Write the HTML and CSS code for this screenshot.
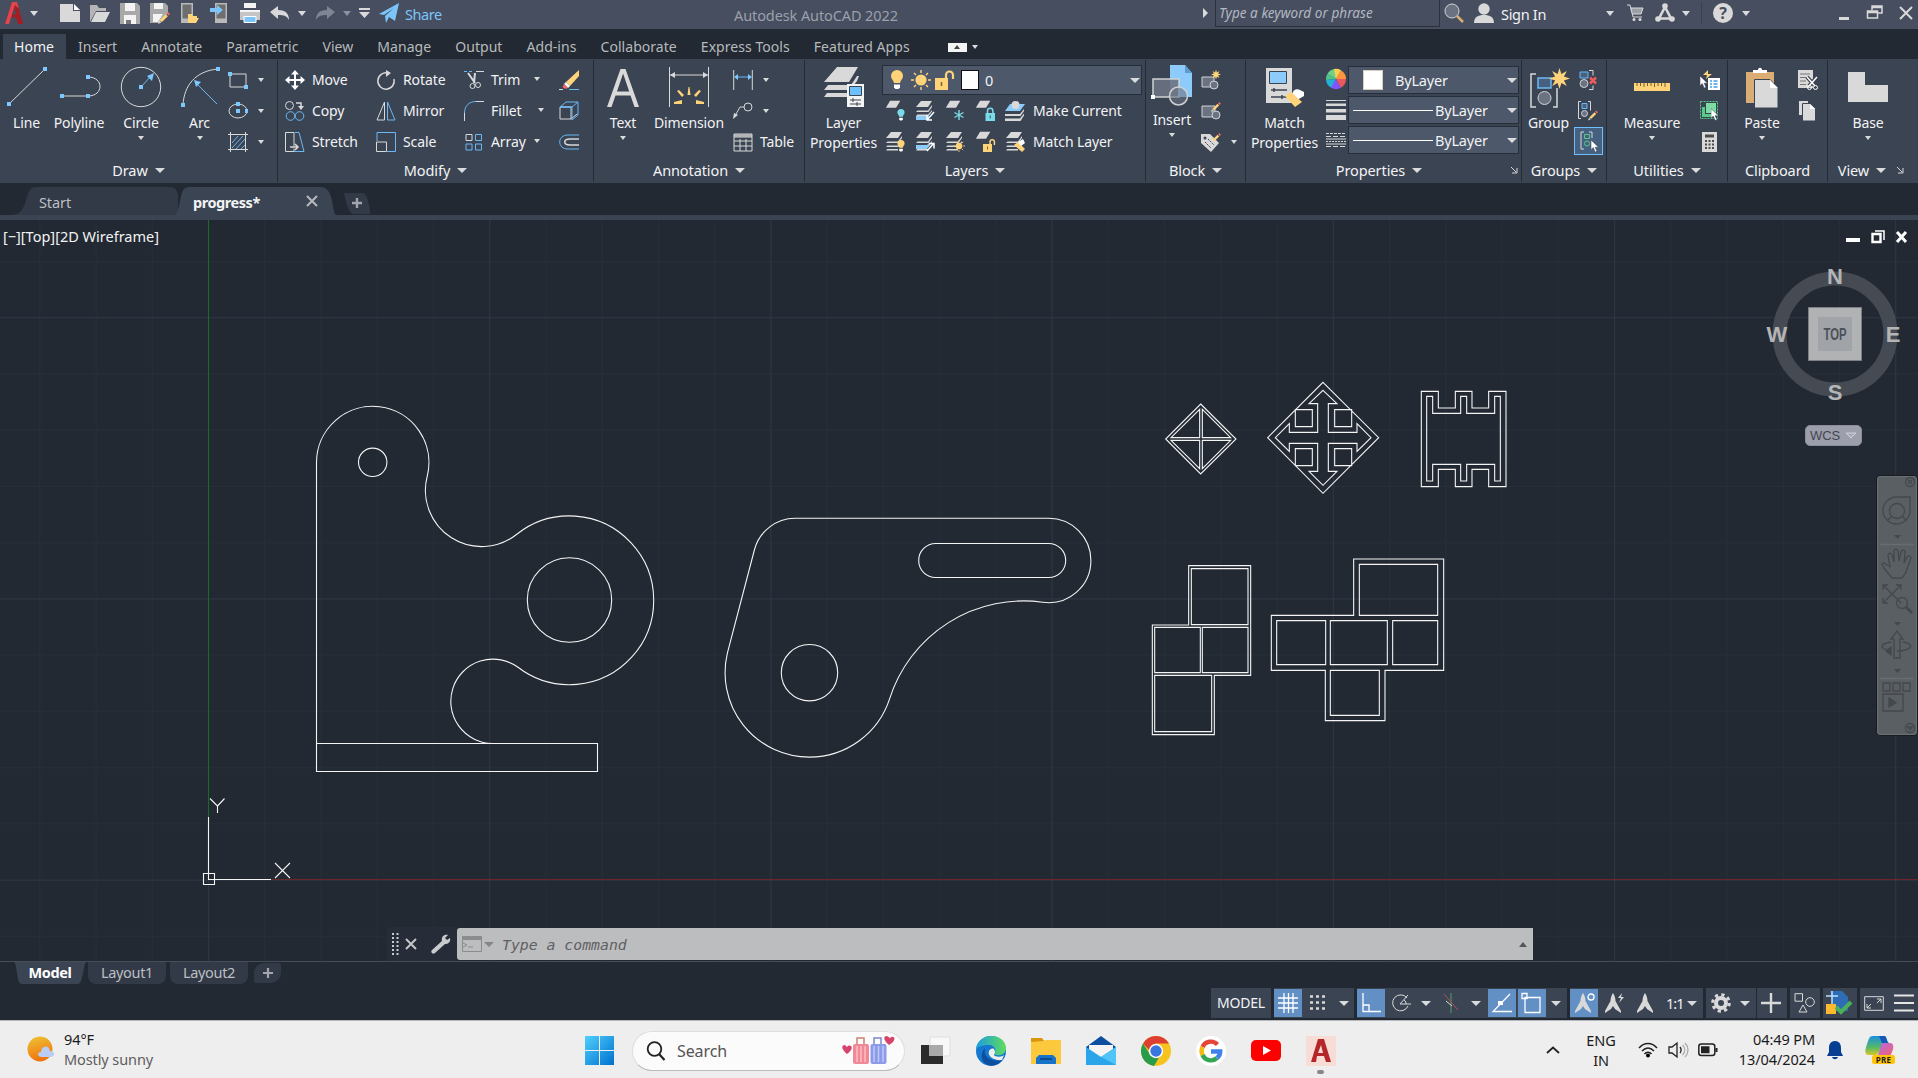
FILE: index.html
```html
<!DOCTYPE html>
<html lang="en">
<head>
<meta charset="utf-8">
<title>Autodesk AutoCAD 2022</title>
<link rel="stylesheet" href="styles.css">
</head>
<body>
<svg class="defs" width="0" height="0">
  <symbol id="sheet" viewBox="0 0 20 20"><path class="fl" d="M6 1h12l-5 8H1z"/></symbol>
  <symbol id="stack" viewBox="0 0 20 20"><path class="fl" d="M6 0h11l-4 6H1zM2.500 9.500H13l4-5.500v2L13.500 11H1zM2.500 13.500H13l4-4.500v1.500L13.500 15H1zM1 18.500h12V17H2.200z"/></symbol>
  <symbol id="burst" viewBox="0 0 20 20"><path class="fy" d="M10 0l1.800 5.800L17 2.800l-2.800 5.300L20 10l-5.800 1.900 2.800 5.300-5.200-2.900L10 20l-1.800-5.700L3 17.200l2.800-5.300L0 10l5.800-1.900L3 2.800l5.200 3z"/></symbol>
  <symbol id="pencil" viewBox="0 0 12 12"><path fill="#f06a63" d="M8.500 1.500L10 0l2 2-1.500 1.500z"/><path class="fy" d="M7.800 2.200l2 2L4 10 1.500 8.400z"/><path class="fl" d="M1.300 8.800L0 12l3.400-1.500z"/></symbol>
  <symbol id="pointer" viewBox="0 0 12 16"><path fill="#fff" stroke="#3b4453" stroke-width=".7" d="M0 0v13l3-3 2.500 6 2.500-1-2.500-5.500H10z"/></symbol>
  <symbol id="bulb" viewBox="0 0 12 20"><path d="M6 0a6 6 0 0 1 6 6c0 3-2.500 4-3 7H3C2.500 10 0 9 0 6a6 6 0 0 1 6-6z"/><path fill="#fff" d="M3 14.500h6v3L7.500 19h-3L3 17.500z"/></symbol>
  <symbol id="sun" viewBox="0 0 20 20"><circle class="fy" cx="10" cy="10" r="5.600"/><path stroke="#ffd37a" stroke-width="1.400" d="M10 0v3M10 17v3M0 10h3M17 10h3M3 3l2 2M15 15l2 2M3 17l2-2M15 5l2-2"/></symbol>
  <symbol id="launch" viewBox="0 0 8 8"><path class="l" d="M1 1l5 5M7 2v5H2"/></symbol>
  <symbol id="needle" viewBox="0 0 20 20"><path class="fl" d="M10 0c1.500 2 2.500 5 2.500 8l5.500 10v2l-6-4-2-3-2 3-6 4v-2L7.500 8c0-3 1-6 2.500-8z"/></symbol>
</svg>

<header class="titlebar">
  <div class="app-menu">
    <svg width="20" height="24" viewBox="0 0 20 24"><path fill="#a51d22" d="M1 23L8 1h5l6 22h-5l-1.500-6L7 16l-2 7z"/><path fill="#e0474c" d="M8 1h5l2 7-4-4-6 19H1z"/><path fill="#464e60" d="M10.300 7l2 6.500H8.200z"/></svg>
    <i class="caret"></i>
  </div>
  <div class="quick">
    <svg width="20" height="20"><path class="fl" d="M0 1h13v7h7v11H0z"/><path fill="#fff" d="M14 1l6 6h-6z"/></svg>
    <svg width="20" height="20"><path fill="#b5b5b5" d="M0 19V2h7l2 3h7v3H6z"/><path class="fl" d="M6 9h14l-5 10H1z"/></svg>
    <svg width="20" height="22"><path fill="#a9a9a9" d="M0 1h17l3 3v18H0z"/><path fill="#f4f4f4" d="M5 1h10v8H5zM4 13h12v9H4z"/><path fill="#777" d="M6 18h5v4H6z"/></svg>
    <svg width="20" height="22"><path fill="#a9a9a9" d="M0 1h15l3 3v7l-9 10H0z"/><path fill="#f4f4f4" d="M4 1h9v6H4zM3 12h10l-5 8H3z"/><use href="#pencil" x="8" y="10" width="12" height="12"/></svg>
    <svg width="20" height="22"><rect x="1" y="1" width="12" height="20" fill="#b9b9b9"/><rect x="2.500" y="2.500" width="9" height="14" fill="#6e6e6e"/><path class="fy" d="M8 21v-9h4l1 2h4v2h2l-3 5z"/></svg>
    <svg width="20" height="22"><rect x="5" y="1" width="12" height="20" fill="#b9b9b9"/><rect x="6.500" y="2.500" width="9" height="14" fill="#6e6e6e"/><path fill="#7cc5fb" d="M0 6h7V3l6 5-6 5v-3H0z"/></svg>
    <svg width="20" height="22"><path fill="#f4f4f4" d="M4 1h12v5H4zM0 8h20v3H0z"/><path fill="#c5c5c5" d="M0 10h20v8H0z"/><path fill="#7cc5fb" stroke="#fff" d="M4 14.500h12v6H4z"/></svg>
    <svg width="20" height="16"><path class="fl" d="M0 7l8-6v4c8 0 11 4 11 10-2-4-5-5-11-5v4z"/></svg>
  </div>
  <div class="quick-more">
    <i class="caret"></i>
    <svg class="redo" width="20" height="16"><path fill="#7e8594" d="M20 7l-8-6v4C4 5 1 9 1 15c2-4 5-5 11-5v4z"/></svg>
    <i class="caret dim"></i>
    <svg class="custom" width="11" height="10"><path class="fl" d="M0 0h11v2H0zM0 4h11L5.500 10z"/></svg>
    <svg class="plane" width="20" height="20"><path fill="#7cc5fb" d="M0 11L20 0l-4 18-6-4-3 6-1-7 9-8-10 7z"/></svg>
    <span class="share">Share</span>
  </div>
  <div class="app-title">Autodesk AutoCAD 2022</div>
  <i class="caret-right"></i>
  <div class="keyword">Type a keyword or phrase</div>
  <svg class="mag" width="20" height="20"><circle cx="8" cy="8" r="7" fill="#6b7383" class="stl"/><path stroke="#d9ad74" stroke-width="2.500" d="M13 13l6 6"/></svg>
  <svg class="user" width="20" height="20"><circle class="fl" cx="10" cy="6" r="5.700"/><path class="fl" d="M0 20c0-6 4-8 10-8s10 2 10 8z"/></svg>
  <span class="signin">Sign In</span>
  <i class="caret c1"></i>
  <svg class="cart" width="17" height="18"><path fill="#9b9fa7" d="M3 4h13l-2 6H5z"/><path class="l" d="M0 1h3l3 12h9M4 4h12l-2 6H5"/><circle class="fl" cx="7" cy="15.500" r="1.500"/><circle class="fl" cx="13" cy="15.500" r="1.500"/></svg>
  <svg class="tri" width="20" height="20"><path d="M10 4L4 15.500h12z" fill="none" stroke="#d9d9d9" stroke-width="2.600"/><circle class="fl" cx="10" cy="3" r="2.800"/><circle class="fl" cx="3" cy="16" r="2.800"/><circle class="fl" cx="17" cy="16" r="2.800"/></svg>
  <i class="caret c2"></i>
  <span class="help">?</span>
  <i class="caret c3"></i>
  <svg class="winbtns" width="74" height="16"><path fill="#d9d9d9" d="M0 12h10v3H0z"/><path class="l" stroke-width="1.500" d="M33 5V1h10v7h-4M28.500 6h10v7h-10zM28.500 7.500h10M33 2.500h10"/><path d="M61 2l12 12M73 2L61 14" stroke="#d9d9d9" stroke-width="2"/></svg>
</header>

<nav class="ribbon-tabs">
  <span class="on">Home</span><span>Insert</span><span>Annotate</span><span>Parametric</span><span>View</span><span>Manage</span><span>Output</span><span>Add-ins</span><span>Collaborate</span><span>Express Tools</span><span>Featured Apps</span>
  <b class="mini"></b><i class="caret"></i>
</nav>

<section class="ribbon">
  <div class="panel draw">
    <div class="body">
      <div class="big w-line"><svg width="40" height="40"><path class="l" d="M2 38L38 3"/><path class="fb" d="M0 36h4v4H0zM36 1h4v4h-4z"/></svg><span>Line</span></div>
      <div class="big w-poly"><svg width="40" height="40"><path class="l" d="M2 30h26c16 0 16-19 0-19"/><path class="fb" d="M0 28h4v4H0zM26 28h4v4h-4zM26 9h4v4h-4z"/></svg><span>Polyline</span></div>
      <div class="big w-circle"><svg width="42" height="42"><circle class="l" cx="21" cy="21" r="19.700"/><path class="b" d="M21 21l10-11"/><path class="fb" d="M19 19h4v4h-4zM34 7l-2 8-5-5z"/></svg><span>Circle</span><i class="caret"></i></div>
      <div class="big w-arc"><svg width="40" height="42"><path class="l" d="M3 39C4 20 15 5 38 3"/><path class="b" d="M37 38L16 17"/><path class="fb" d="M1 37h4v4H1zM36 1h4v4h-4zM14 14l7 2-5 5z"/></svg><span>Arc</span><i class="caret"></i></div>
      <div class="col">
        <div class="row"><svg width="20" height="20"><path class="l" d="M2 4h16v13H2z"/><path class="fb" d="M0 2h4v4H0zM16 15h4v4h-4z"/></svg><i class="caret"></i></div>
        <div class="row"><svg width="20" height="20"><ellipse class="l" cx="10" cy="10" rx="9" ry="7"/><path class="fb" d="M8 1h4v4H8zM8 8h4v4H8zM17 8h3v4h-3z"/></svg><i class="caret"></i></div>
        <div class="row"><svg width="20" height="20"><path class="b" d="M4 11l6-7M4 16L15 4M8 17l9-10M13 17l4-4"/><path class="l" d="M0 2.500h20M0 17.500h20M2.500 0v20M17.500 0v20"/></svg><i class="caret"></i></div>
      </div>
    </div>
    <div class="label">Draw<i class="caret lg"></i></div>
  </div>

  <div class="panel modify">
    <div class="body">
      <div class="col m1">
        <div class="row"><svg width="20" height="20"><path fill="#fff" d="M10 0l4 4.500h-3V9h4.500V6L20 10l-4.500 4v-3H11v4.500h3L10 20l-4-4.500h3V11H4.500v3L0 10l4.500-4v3H9V4.500H6z"/></svg><span>Move</span></div>
        <div class="row"><svg width="20" height="20"><circle class="l" cx="4.500" cy="4.500" r="4"/><path class="l" stroke-width="1.500" d="M11 2h5v5"/><path class="fl" d="M13 5h6l-3 4z"/><circle class="b" cx="5.500" cy="15" r="4.300"/><circle class="b" cx="14.500" cy="15" r="4.300"/></svg><span>Copy</span></div>
        <div class="row"><svg width="20" height="20"><path class="l" d="M9 14V.5H.5v19H9v-3"/><path class="b" d="M10 .5h4l5 19H9"/><path class="l" stroke-width="1.500" d="M5 15h8M10 12l3 3-3 3"/></svg><span>Stretch</span></div>
      </div>
      <div class="col m2">
        <div class="row"><svg width="20" height="20"><path class="l" stroke-width="1.500" d="M12 3A8.200 8.200 0 1 0 18 9"/><path class="fl" d="M10 0l5 3-5 4z"/></svg><span>Rotate</span></div>
        <div class="row"><svg width="20" height="20"><path class="l" d="M8.500 1v18H1z"/><path class="b" d="M11.500 1v18H19z"/></svg><span>Mirror</span></div>
        <div class="row"><svg width="20" height="20"><path class="b" d="M1 9V.5h18.500v19H11"/><path class="l" d="M.5 10h10v9.500H.5z"/></svg><span>Scale</span></div>
      </div>
      <div class="col m3">
        <div class="row"><svg width="20" height="20"><path class="b" stroke-dasharray="3 2" d="M0 1.500h8"/><path class="l" d="M12 1.500h8"/><path class="l" stroke-width="2" d="M4 3l7 10M11 3l-1 10"/><circle class="l" cx="8.500" cy="16" r="2.500"/><circle class="l" cx="14" cy="15" r="2.500"/></svg><span>Trim</span><i class="caret"></i></div>
        <div class="row"><svg width="20" height="20"><path class="l" d="M.5 20v-8M12 .5h8"/><path class="b" d="M.5 12C.5 5 5 .5 12 .5"/></svg><span>Fillet</span><i class="caret f"></i></div>
        <div class="row"><svg width="20" height="20"><path class="l" d="M2 2.500h6v6H2z"/><path class="b" d="M11.500 2.500h6v6h-6zM2 12h6v6H2zM11.500 12h6v6h-6z"/></svg><span>Array</span><i class="caret"></i></div>
      </div>
      <div class="col">
        <div class="row"><svg width="20" height="20"><path class="fy" d="M20 0v6l-9 10-4-4z"/><path fill="#fff" d="M7 12l4 4-2 2-4-4z"/><path fill="#f06a63" d="M5 14l4 4c-2 1.500-6 .5-5-2z"/><path class="l" d="M0 19.500h4"/><path class="b" d="M10 19.500h10"/></svg></div>
        <div class="row"><svg width="20" height="20"><path class="l" d="M1 6h11v12H1zM12 18l6-5"/><path class="b" d="M1 6l6-5h12v13l-6 5V6zM13 6l6-5M1 6h12"/></svg></div>
        <div class="row"><svg width="20" height="20"><path class="b" d="M20 3H9C-2 3-2 17 9 17h11"/><path class="l" stroke-width="1.500" d="M20 7h-9c-7 0-7 6 0 6h9"/></svg></div>
      </div>
    </div>
    <div class="label">Modify<i class="caret lg"></i></div>
  </div>

  <div class="panel annot">
    <div class="body">
      <div class="big w-text"><svg width="34" height="42"><path class="fl" d="M1 41L14.500 3h5L33 41h-4.500l-4-11.500H9.500L5.500 41zM11 25.500h12.200L17.100 7.500z"/></svg><span>Text</span><i class="caret"></i></div>
      <div class="big w-dim"><svg width="42" height="42"><path class="l" d="M1.500 1v40M40.500 1v40M2 9h38"/><path class="fl" d="M2 9l5-3v6zM40 9l-5-3v6z"/><path class="fy" d="M19.500 29l1-8h1l1 8zM14 31l-5-6 2-1 5 5zM28 31l5-6-2-1-5 5zM6 36l8-2v4H6zM36 36l-8-2v4h8z"/></svg><span>Dimension</span></div>
      <div class="col">
        <div class="row"><svg width="20" height="20"><path class="l" d="M.7 0v20M19.300 0v20"/><path class="b" d="M3 7h14"/><path class="fb" d="M1 7l4-3v6zM19 7l-4-3v6z"/></svg><i class="caret"></i></div>
        <div class="row"><svg width="20" height="20"><circle class="l" cx="15" cy="6" r="4"/><path class="l" d="M11 6H7L2 15"/><path class="fl" d="M0 18l1-6 4 2z"/></svg><i class="caret"></i></div>
        <div class="row tbl"><svg width="20" height="20"><path class="l" d="M1 2h18v17H1zM1 4h18M1 9h18M1 14h18M7 7v12M13 7v12"/><path class="fl" opacity=".5" d="M1 2h18v4H1z"/></svg><span>Table</span></div>
      </div>
    </div>
    <div class="label">Annotation<i class="caret lg"></i></div>
  </div>

  <div class="panel layers">
    <div class="body">
      <div class="big w-lay"><svg width="42" height="42"><path class="fl" d="M14 1h21l-9 15H1zM5 19h23l6-9h2l-2 5-7 9H1zM4 27h21v4H1z"/><path fill="#f4f4f4" d="M24 18h17v23H24z"/><path fill="#6cc0ff" stroke="#3b4453" d="M26.500 20.500h12v9h-12z"/><path stroke="#3b4453" fill="none" d="M27 34h11M27 38h11M30 32v4M34 36v4"/></svg><span>Layer<br>Properties</span></div>
      <div class="col">
        <div class="combo layer-combo">
          <svg width="14" height="22" fill="#ffd37a"><use href="#bulb" x="0" y="1" width="14" height="20"/></svg>
          <svg width="20" height="22"><use href="#sun" x="0" y="0" width="20" height="22"/></svg>
          <svg width="19" height="22"><path class="fy" d="M0 9h13v12H0z"/><path stroke="#ffd37a" stroke-width="2.200" fill="none" d="M11 9V6a3.500 3.500 0 0 1 7 0v4"/><path stroke="#7a6130" stroke-width="1.500" d="M6.500 13v4"/></svg>
          <b class="swatch"></b><span>0</span><i class="caret lg"></i>
        </div>
        <div class="row five">
          <svg width="20" height="20" fill="#79dbe8"><use href="#sheet" width="17" height="17" y="-1"/><use href="#bulb" x="12" y="8" width="8" height="12"/></svg>
          <svg width="20" height="20"><use href="#stack" width="20" height="20"/><path class="fb2" d="M1 15h11l2-2v3l-2 3H1z"/><path stroke="#fff" stroke-width="1.500" d="M19 11l-6 7M12 14v5h5" fill="none"/></svg>
          <svg width="20" height="20"><use href="#sheet" width="17" height="17" y="-1"/><path stroke="#79dbe8" stroke-width="1.400" d="M14 9v10M9.500 11.500l9 5M18.500 11.500l-9 5"/></svg>
          <svg width="20" height="20"><use href="#sheet" width="17" height="17" y="-1"/><path fill="#79dbe8" d="M10.500 12h9.500v8h-9.500z"/><path stroke="#79dbe8" stroke-width="1.500" fill="none" d="M12.500 12v-2a2.700 2.700 0 0 1 5.400 0v2"/><path stroke="#2b5960" d="M15.200 14.500v3"/></svg>
          <svg width="20" height="20"><path class="fb2" d="M5 3h15l-5 7H0z"/><circle class="fl" cx="10.500" cy="4" r="4"/><path class="fl" d="M0 13h15l4-5v2l-3.500 5H0zM0 17.500h15l4-5v2L15.500 20H0z"/></svg>
          <span>Make Current</span>
        </div>
        <div class="row five">
          <svg width="20" height="20" fill="#ffd37a"><use href="#stack" width="20" height="20"/><use href="#bulb" x="12" y="8" width="8" height="12"/></svg>
          <svg width="20" height="20"><use href="#stack" width="20" height="20"/><path class="fb2" d="M1 13h11l2-2v3l-2 3H1z"/><path stroke="#fff" stroke-width="1.500" d="M12 19l7-8M14 11.500h5v5" fill="none"/></svg>
          <svg width="20" height="20"><use href="#stack" width="20" height="20"/><use href="#sun" x="8" y="8" width="12" height="12"/></svg>
          <svg width="20" height="20"><use href="#sheet" width="17" height="17" y="-1"/><path class="fy" d="M8 12h9v8H8z"/><path stroke="#ffd37a" stroke-width="1.500" fill="none" d="M15 12v-2a2.200 2.200 0 0 1 4.400 0v3"/><path stroke="#7a6130" d="M12.500 14.500v3"/></svg>
          <svg width="20" height="20"><use href="#stack" width="20" height="20"/><path class="fy" d="M9 13l4-3 7 7-3 3z"/><path fill="#fff" d="M13 10l5-3 2 4-4 3z"/></svg>
          <span>Match Layer</span>
        </div>
      </div>
    </div>
    <div class="label">Layers<i class="caret lg"></i></div>
  </div>

  <div class="panel block">
    <div class="body">
      <div class="big w-ins"><svg width="42" height="42"><path fill="#8ccbfa" d="M19 0h15l7 8v24H19z"/><path fill="#5d9cd0" d="M34 0v8h7z"/><path class="stl" stroke-width="1.500" fill="#6b7383" fill-opacity=".9" d="M2 14h26v18H2z"/><circle class="stl" stroke-width="1.500" fill="#6b7383" fill-opacity=".6" cx="27.500" cy="31" r="9"/><path fill="#fff" d="M0 30h4v4H0z"/></svg><span>Insert</span><i class="caret"></i></div>
      <div class="col">
        <div class="row"><svg width="20" height="20"><path class="stl" fill="#6b7383" d="M1 7h12v10H1z"/><circle class="stl" fill="#6b7383" cx="13" cy="15" r="4"/><use href="#burst" x="10" y="-1" width="10" height="11"/></svg></div>
        <div class="row"><svg width="20" height="20"><path class="stl" fill="#6b7383" d="M1 5h13v11H1z"/><circle class="stl" fill="#6b7383" cx="15" cy="14" r="4"/><use href="#pencil" x="10" y="0" width="10" height="12"/></svg></div>
        <div class="row"><svg width="20" height="20"><path class="fl" d="M0 2h9l9 9-8 9-10-9z"/><circle cx="4" cy="6" r="1.500" fill="#3b4453"/><path stroke="#3b4453" stroke-dasharray="2 1" d="M4 10l6 6M7 7l6 6"/><use href="#pencil" x="10" y="0" width="10" height="12"/></svg><i class="caret"></i></div>
      </div>
    </div>
    <div class="label">Block<i class="caret lg"></i></div>
  </div>

  <div class="panel props">
    <div class="body">
      <div class="big w-match"><svg width="42" height="42"><path class="fl" d="M2 2h26v35H2z"/><path fill="#8ccbfa" stroke="#3b4453" d="M5.500 5.500h17v12h-17z"/><path stroke="#3b4453" d="M7 24h16M7 31h16M10 22v4M18 29v4" stroke-width="1.500"/><path fill="#fff" d="M28 28c2-6 6-5 8-4l4 2v4l-7 4z"/><path class="fy" d="M21 30l6-4 11 10-7 5z"/></svg><span>Match<br>Properties</span></div>
      <div class="col ic">
        <svg width="20" height="20"><path fill="#6ecf8a" d="M10 10V0a10 10 0 0 0-8.700 5z"/><path fill="#4fc58b" d="M10 10L1.300 5A10 10 0 0 0 0 11z"/><path fill="#23b1d8" d="M10 10L0 11a10 10 0 0 0 6 8z"/><path fill="#8353ff" d="M10 10L5 18.700a10 10 0 0 0 10 0z"/><path fill="#e8595c" d="M10 10l5 8.700a10 10 0 0 0 5-8.700z"/><path fill="#ff9440" d="M10 10h10a10 10 0 0 0-5-8.700z"/><path fill="#ffd04f" d="M10 10l5-8.700A10 10 0 0 0 8 0z"/></svg>
        <svg width="20" height="20"><path class="fl" d="M0 0h20v1H0zM0 3.500h20V6H0zM0 9h20v3.500H0zM0 15h20v5H0z"/></svg>
        <svg width="20" height="20"><path class="l" d="M0 13h20M0 8h20"/><path class="l" stroke-dasharray="3 1" d="M0 2.500h20"/><path class="l" stroke-dasharray="5 2" d="M0 5.500h20M0 15.500h20"/><path class="l" stroke-dasharray="2 1" d="M0 10.500h20"/></svg>
      </div>
      <div class="combos">
        <div class="combo"><b class="swatch wide"></b><span>ByLayer</span><i class="caret lg"></i></div>
        <div class="combo"><b class="ln"></b><span>ByLayer</span><i class="caret lg"></i></div>
        <div class="combo"><b class="ln"></b><span>ByLayer</span><i class="caret lg"></i></div>
      </div>
    </div>
    <div class="label">Properties<i class="caret lg"></i><svg class="launch" width="8" height="8"><use href="#launch"/></svg></div>
  </div>

  <div class="panel groups">
    <div class="body">
      <div class="big w-grp"><svg width="42" height="42"><path class="l" stroke-width="1.500" d="M8 8H3v33h5M25 41h4V22"/><path class="b" fill="#4c6482" stroke-width="1.500" d="M10 12h13v10H10z"/><circle class="stl" fill="#6b7383" cx="16.500" cy="32" r="6.500"/><use href="#burst" x="21" y="2" width="21" height="21"/></svg><span>Group</span></div>
      <div class="col">
        <div class="row"><svg width="20" height="20"><path class="b" fill="#4c6482" d="M2 2h8v6H2z"/><circle class="stl" fill="#6b7383" cx="6" cy="13.500" r="4"/><path class="l" d="M11 .5h4v5M11 19.500h4v-4"/><path stroke="#ee5b5b" stroke-width="2.500" d="M12 7.500l6 6M18 7.500l-6 6"/></svg></div>
        <div class="row"><svg width="20" height="20"><path class="l" d="M3 .5H.5v17H3M10 .5h2.500v9"/><path class="b" fill="#4c6482" d="M4 2.500h5v5H4z"/><circle class="stl" cx="6.500" cy="12.500" r="3" fill="#6b7383"/><use href="#pencil" x="10" y="9" width="10" height="11"/></svg></div>
        <div class="row"><div class="toggle"><svg width="20" height="22"><path class="l" d="M5 2H2v17h3M10 2h3v6"/><path stroke="#57c98a" fill="none" d="M5.500 4.500h5v4h-5z"/><circle stroke="#57c98a" fill="none" cx="8" cy="13.500" r="2.500"/><use href="#pointer" x="12" y="10" width="9" height="12"/></svg></div></div>
      </div>
    </div>
    <div class="label">Groups<i class="caret lg"></i></div>
  </div>

  <div class="panel utils">
    <div class="body">
      <div class="big w-meas"><svg width="36" height="40"><path class="fy" d="M0 17h36v8H0z"/><path stroke="#77602f" d="M3 17v3M6.500 17v3M10 17v4M13.500 17v3M17 17v3M20.500 17v4M24 17v3M27.500 17v3M31 17v4"/></svg><span>Measure</span><i class="caret"></i></div>
      <div class="col">
        <div class="row"><svg width="20" height="20"><path fill="#fff" d="M8 8h12v12H8z"/><path stroke="#3f9de8" stroke-width="1.500" d="M10 11h2M13.500 11h4M10 14h2M13.500 14h4M10 17h2M13.500 17h4"/><use href="#pointer" y="5" width="9" height="14"/><path class="fy" d="M8 0L3 5h4l-1 4 6-5H8z"/></svg></div>
        <div class="row"><svg width="20" height="20"><path stroke="#57c98a" stroke-dasharray="2 1" fill="none" d="M.5.500h17v17H.5z"/><path fill="#57c98a" d="M2 6h3v7h9v3H2z"/><path fill="#7ddca4" d="M6 2h10v10H6z"/><use href="#pointer" x="11" y="7" width="9" height="13"/></svg></div>
        <div class="row"><svg width="16" height="20"><path class="fl" d="M0 0h15v20H0z"/><path fill="#4b4b4b" d="M3 2.500h9v3H3zM3 8h2v2H3zM6.500 8h2v2h-2zM10 8h2v2h-2zM3 11.500h2v2H3zM6.500 11.500h2v2h-2zM10 11.500h2v2h-2zM3 15h2v2H3zM6.500 15h2v2h-2zM10 15h2v2h-2z"/></svg></div>
      </div>
    </div>
    <div class="label">Utilities<i class="caret lg"></i></div>
  </div>

  <div class="panel clip">
    <div class="body">
      <div class="big w-paste"><svg width="34" height="42"><path fill="#d9ad74" d="M1 6h28v31H1z"/><path fill="#fff" d="M8 7V4h5c0-3 4-3 4 0h5v3z"/><path class="fl" stroke="#3b4453" d="M9.500 13.500H25l8 9V42H9.500z"/><path fill="#fff" d="M25 14v8h8z"/></svg><span>Paste</span><i class="caret"></i></div>
      <div class="col">
        <div class="row"><svg width="20" height="20"><path class="fl" d="M0 0h15v18H0z"/><path stroke="#777" d="M2 4h10M2 7.500h8M2 11h6M2 14.500h6"/><path stroke="#3b4453" stroke-width="4" d="M9 7l9 10M19 7l-8 9"/><path stroke="#fff" stroke-width="1.500" d="M9 7l8 9M19 7l-8 9"/><circle stroke="#fff" fill="none" cx="11.500" cy="17.500" r="2"/><circle stroke="#fff" fill="none" cx="17.500" cy="17.500" r="2"/></svg></div>
        <div class="row"><svg width="18" height="20"><path class="fl" d="M1 0h9v14H1z"/><path class="fl" stroke="#3b4453" d="M4.500 2.500H12l5.500 5V20h-13z"/><path fill="#fff" d="M12 3v5h5z"/></svg></div>
      </div>
    </div>
    <div class="label">Clipboard</div>
  </div>

  <div class="panel view">
    <div class="body">
      <div class="big w-base"><svg width="40" height="40"><path class="fl" d="M0 6h17v13h23v17H0z"/></svg><span>Base</span><i class="caret"></i></div>
    </div>
    <div class="label">View<i class="caret lg"></i><svg class="launch" width="8" height="8"><use href="#launch"/></svg></div>
  </div>
</section>

<nav class="file-tabs">
  <div class="ftab start">Start</div>
  <div class="ftab current"><span>progress*</span><svg width="12" height="12"><path stroke="#b3b6ba" stroke-width="2.200" d="M1 1l10 10M11 1L1 11"/></svg></div>
  <div class="ftab plus"><svg width="10" height="10"><path stroke="#a3a6ab" stroke-width="2.400" d="M5 0v10M0 5h10"/></svg></div>
</nav>

<main class="canvas">
  <svg class="drawing" width="1918" height="741" viewBox="0 220 1918 741">
    <defs>
      <pattern id="minor" x="208" y="36" width="56.240" height="56.240" patternUnits="userSpaceOnUse"><path d="M.5 0v56.240M0 .5h56.240" stroke="#262e39" fill="none"/></pattern>
      <pattern id="major" x="208" y="36" width="281.200" height="281.200" patternUnits="userSpaceOnUse"><path d="M.5 0v281.200M0 .5h281.200" stroke="#2e3545" fill="none"/></pattern>
    </defs>
    <path fill="url(#minor)" d="M0 220h1918v741H0z"/>
    <path fill="url(#major)" d="M0 220h1918v741H0z"/>
    <path stroke="#1b6a26" d="M208.500 220v597"/>
    <path stroke="#6c262e" d="M271 879.500h1647"/>
    <g fill="none" stroke="#f4f4f4" stroke-width="1.100">
      <path d="M208.500 817v62.500H271M203.500 873.500h11v11h-11zM210 798.500l7.500 7.500v7M217.500 806l7-7.500M275 863l15 15M290 863l-15 15"/>
      <path d="M316.500 743.500V462.300A56.200 56.200 0 1 1 427.200 476.300A56.200 56.200 0 0 0 516.800 534.200A84.400 84.400 0 1 1 518 667.300A42.200 42.200 0 1 0 492.300 743.500"/>
      <path d="M316.500 743.500h281v28h-281z"/>
      <circle cx="372.700" cy="462.300" r="14.200"/><circle cx="569.500" cy="600" r="42.200"/>
      <path d="M795 518.300H1048.700A42.200 42.200 0 0 1 1090.900 560.500A42.200 42.200 0 0 1 1042.700 602.200A140.600 140.600 0 0 0 889.600 698.900A84.400 84.400 0 0 1 809.500 757.100A84.400 84.400 0 0 1 727.500 652.700L754.500 549.500A42.200 42.200 0 0 1 795 518.300z"/>
      <circle cx="809.500" cy="672.700" r="28.200"/>
      <path d="M935.700 543.500h113a17 17 0 0 1 0 34h-113a17 17 0 0 1 0-34z"/>
      <g class="symbols" transform="translate(1130 360) scale(.33333)">
        <path d="M212 132L318 237 212 342 107 237zM209 148v85h-86zM217 148v85h85zM209 326v-85h-86zM217 326v-85h85z"/>
        <path d="M579 67L746 233 579 400 413 233zM579 91l42 40h-26v86h86v-26l42 42-42 41v-24h-86v84h26l-42 42-42-42h26v-84h-85v24l-42-41 42-42v26h85v-86h-26zM496 149h51v51h-51zM614 149h51v51h-51zM496 266h51v51h-51zM614 266h51v51h-51z"/>
        <path d="M874 94h51v50h51V94h50v50h50V94h52v286h-52v-52h-50v52h-50v-52h-51v52h-51zM890 109h18v51h84v-51h18v51h84v-51h17v254h-17v-50h-84v50h-18v-50h-84v50h-18z"/>
        <path d="M176 617h186v329H253v178H67V795h109zM184 626h170v168H184zM74 802h137v136H74zM217 802h137v136H217zM74 946h171v169H74z"/>
        <path d="M671 597h270v334H765v151H586V931H424V766h247zM688 613h235v153H688zM440 782h147v132H440zM601 782h171v132H601zM788 782h135v132H788zM601 931h147v135H601z"/>
      </g>
    </g>
  </svg>
  <div class="view-label"><span>[−]</span><span>[Top]</span><span>[2D Wireframe]</span></div>
  <svg class="view-win" width="66" height="16"><path fill="#fff" d="M0 9h14v4H0z"/><path stroke="#fff" stroke-width="2.400" fill="none" d="M26.500 5h8v8h-8z"/><path stroke="#fff" stroke-width="1.500" d="M29 2h9v9" fill="none"/><path stroke="#fff" stroke-width="3" d="M51 3l9 10M60 3l-9 10"/></svg>

  <div class="viewcube">
    <svg width="140" height="180" viewBox="0 0 140 180">
      <circle cx="71" cy="70" r="55.500" fill="none" stroke="#464b53" stroke-width="14"/>
      <path fill="#b1b2b4" stroke="#7e7f82" d="M44.500 43.500h53v53h-53z"/><path fill="#a0a4a9" d="M54 53h34v34H54z"/>
      <g class="compass" text-anchor="middle"><text x="71" y="20">N</text><text x="71" y="136">S</text><text x="13" y="78">W</text><text x="129" y="78">E</text></g>
      <text class="top" x="71" y="76" text-anchor="middle" textLength="23" lengthAdjust="spacingAndGlyphs">TOP</text>
    </svg>
    <div class="wcs">WCS<svg width="12" height="8"><path d="M1 1h10L6 6z" fill="#a9abb8" stroke="#cfd0da"/></svg></div>
  </div>

  <div class="navbar">
    <svg width="40" height="260" viewBox="0 0 40 260" fill="none" stroke="#44484d" stroke-width="1.300">
      <circle cx="33" cy="6" r="4.500"/><path d="M31 4l4 4M35 4l-4 4"/>
      <path d="M20 21h13v14a13.500 13.500 0 1 1-13-14z"/><circle cx="20" cy="35" r="7.500"/><path d="M14.500 40.500l-4 4M25.500 40.500l4 4"/>
      <path d="M3 68.500h34M3 202.500h34" stroke="#676c70"/>
      <path d="M15 102L7 92c-2-3-3-5 0-5l6 4-2-12c1-3 3-2 4 0l2 7V75c1-3 3-2 4 0l1 10 2-9c1-3 4-2 4 0l-1 11 3-6c2-2 4-1 4 1l-5 14-4 6z"/>
      <path d="M6 109l18 18M24 109L6 127M6 114v-5h5M19 109h5v5M6 122v5h5"/><circle cx="25" cy="127" r="5.500"/><path d="M29 131l6 6" stroke-width="3"/>
      <path d="M17 182v-19h-3l6-8 6 8h-3v19zM14 174c-12-1-12-6 0-8M26 166c12 2 10 8-6 9"/><path fill="#44484d" d="M9 175l5-4v8z"/>
      <path d="M6 207h7v8H6zM16 207h7v8h-7zM26 207h7v8h-7zM6 218h20v17H6z"/><path fill="#44484d" d="M12 222v9l7-4.500z"/>
      <path fill="#44484d" stroke="none" d="M17 59h7l-3.500 4zM17 146h7l-3.500 4zM17 193h7l-3.500 4z"/>
      <circle cx="33" cy="252" r="4.500"/><path d="M30.500 251h5L33 254z"/>
    </svg>
  </div>

  <div class="command">
    <div class="grip">
      <svg width="7" height="22"><path stroke="#c9cacc" stroke-width="2" stroke-dasharray="2 2" d="M1 0v22M5.500 0v22"/></svg>
      <svg width="12" height="12"><path stroke="#c4c5c7" stroke-width="2" d="M1 1l10 10M11 1L1 11"/></svg>
      <svg class="wrench" width="20" height="20"><path fill="#c9cacc" d="M1 16L11 7C10 3 13 0 17 1l-3 3 2 2 3-2c1 4-2 6-5 6L4 19c-2 2-5-1-3-3z"/></svg>
    </div>
    <div class="entry">
      <svg width="20" height="17"><path fill="none" stroke="#8b8c8e" d="M.5.500h19v15H.5z"/><path fill="#8b8c8e" d="M0 0h20v4H0z"/><path stroke="#8b8c8e" fill="none" d="M1 7l4 2-4 2M6 11h5"/></svg>
      <i class="caret lg grey"></i><span>Type a command</span><i class="caret up"></i>
    </div>
  </div>
</main>

<nav class="layout-tabs">
  <span class="on">Model</span><span>Layout1</span><span>Layout2</span>
  <span class="add"><svg width="10" height="10"><path stroke="#a3a6ab" stroke-width="2.200" d="M5 0v10M0 5h10"/></svg></span>
</nav>

<section class="status">
  <div class="seg s-model">MODEL</div>
  <div class="seg s-grid"><b class="act"><svg width="20" height="20"><path class="w" d="M6 0v20M10.500 0v20M15 0v20M0 5h20M0 10h20M0 15h20"/></svg></b><b class="ic"><svg width="16" height="16"><path stroke="#d9d9d9" stroke-width="2.500" stroke-dasharray="3 3" d="M0 1.500h16M0 7.500h16M0 13.500h16"/></svg></b><i class="caret lg"></i></div>
  <div class="seg s-ortho"><b class="act"><svg width="20" height="20"><path class="w" d="M2 0v18.500h18M2 12h6v6"/></svg></b>
    <b class="ic"><svg width="20" height="20"><path class="l" d="M16 5a8 8 0 1 0 1 8M9 11h11M9 11L17 2M13 7c2 1 2 3 2 4"/></svg></b><i class="caret lg p"></i>
    <b class="ic"><svg width="18" height="20"><path stroke="#4fa06a" d="M9 0v20"/><path stroke="#b64f5c" d="M2 1l14 16"/><path stroke="#d9d9d9" d="M4 8l6 5"/></svg></b><i class="caret lg q"></i>
    <b class="act g"><svg width="20" height="20"><path class="w" d="M18 1L1 18.500h19"/><path fill="#fff" d="M6 8h5v4H6z"/></svg></b><b class="act g"><svg width="22" height="20"><path class="w" d="M4 4.500h15v15H4zM1 .5h5v5H1z"/></svg></b><i class="caret lg r"></i></div>
  <div class="seg s-anno"><b class="act"><svg width="21" height="20"><use href="#needle" x="-1" width="20" height="20"/><circle class="w" cx="17" cy="4" r="3"/></svg></b>
    <b class="ic"><svg width="20" height="20"><use href="#needle" x="-1" width="20" height="20"/><path class="fl" d="M18 0l-4 5h3l-2 5 5-6h-3z"/></svg></b><b class="ic"><svg width="20" height="20"><use href="#needle" width="20" height="20"/></svg></b><span>1:1</span><i class="caret lg"></i></div>
  <div class="seg s-gear"><svg width="20" height="20"><circle cx="10" cy="10" r="5" fill="none" stroke="#d9d9d9" stroke-width="4"/><circle cx="10" cy="10" r="8.300" fill="none" stroke="#d9d9d9" stroke-width="3" stroke-dasharray="3.260 3.260"/></svg><i class="caret lg"></i></div>
  <div class="seg s-plus"><svg width="20" height="20"><path stroke="#d9d9d9" stroke-width="2.400" d="M10 0v20M0 10h20"/></svg></div>
  <div class="seg s-iso"><svg width="21" height="20"><path class="l" d="M1 .7h7.500v7.500H1zM5 19l4-7 4 7z"/><circle class="l" cx="16" cy="9" r="4.300"/></svg></div>
  <div class="seg s-perf"><svg width="26" height="24"><path fill="#2e6cb5" d="M4 0h12l6 6v14H8z"/><path stroke="#bfe0ff" stroke-width="1.500" d="M6 0v14M0 5h12"/><path fill="#fdb92e" d="M0 13h10v10H0z"/><path stroke="#4bb05b" stroke-width="4" fill="none" d="M10 16l5 5 10-10"/></svg></div>
  <div class="seg s-full"><svg width="20" height="15"><path class="l" d="M.7.700h18.600v13.600H.7zM3 8v4h4M13 3h4v4M3 12l4-4M17 3l-4 4"/></svg><svg width="20" height="18"><path stroke="#e6e6e6" stroke-width="2.200" d="M0 1.500h20M0 9h20M0 16.500h20"/></svg></div>
</section>

<footer class="taskbar">
  <div class="weather">
    <svg width="30" height="28"><defs><linearGradient id="wg" x1="0" y1="0" x2="0.300" y2="1"><stop offset="0" stop-color="#edc637"/><stop offset="1" stop-color="#f2740f"/></linearGradient></defs><circle cx="13" cy="13" r="12.500" fill="url(#wg)"/><path fill="#b9cdf5" d="M15 21c-5 0-5-5-1-5 0-6 8-8 9-1 6 0 5 6 1 6z"/></svg>
    <div><p>94°F</p><p class="sub">Mostly sunny</p></div>
  </div>
  <div class="apps">
    <svg width="29" height="29"><defs><linearGradient id="win" x2="1" y2="1"><stop offset="0" stop-color="#4fd0fd"/><stop offset="1" stop-color="#0070ce"/></linearGradient></defs><path fill="url(#win)" d="M0 0h14v14H0zM15 0h14v14H15zM0 15h14v14H0zM15 15h14v14H15z"/></svg>
    <div class="search"><svg width="20" height="20"><circle cx="8.500" cy="8" r="6.800" fill="none" stroke="#222" stroke-width="1.800"/><path stroke="#222" stroke-width="2.200" d="M13 13l5.500 6"/></svg><span>Search</span>
      <svg class="bags" width="54" height="30"><path fill="#d6436c" d="M5 18C-2 12 0 9 3 9l2 2c3-4 9 1 0 7zM47 9c-7-6-5-9-2-9l3 2c4-4 8 2-1 7z"/><path fill="none" stroke="#c9826f" stroke-width="1.500" d="M15 9V2h7v7"/><path fill="none" stroke="#7e86c9" stroke-width="1.500" d="M32 9V2h7v7"/><rect x="11" y="8" width="16" height="20" rx="2" fill="#f0889b"/><rect x="28.500" y="8" width="16" height="20" rx="2" fill="#8b9be8"/><path stroke="#ffbeb8" stroke-width="1.500" d="M15 10v16M19 10v16M23 10v16"/><path stroke="#c0c9ff" stroke-width="1.500" d="M32 10v16M36.500 10v16M41 10v16"/></svg></div>
    <svg width="30" height="30"><rect x="9" y="1" width="20" height="19" rx="1" fill="#f8f8f8" stroke="#ddd"/><path fill="#2b2b2b" d="M0 9h22v19H0z"/><path fill="#a9a9a9" d="M8 9h14v11H8z"/></svg>
    <svg width="30" height="30"><defs><linearGradient id="eg" x2="1"><stop offset="0" stop-color="#1b9de2"/><stop offset="1" stop-color="#5fdc5b"/></linearGradient></defs><circle cx="15" cy="15" r="15" fill="#1478cf"/><path fill="url(#eg)" d="M0 13C2-4 29-4 30 12c0 7-8 9-12 6 3-3 1-9-5-9S2 11 0 13z"/><path fill="#0b4f9e" d="M9 12c-2 9 5 14 17 12-4 6-11 7-16 4S4 17 9 12z"/><path fill="#eee" d="M18 13c3 5-2 5 1 7 3 1 7 1 9-1l-2 5c-8 1-15-4-13-9 1-2 3-3 5-2z"/></svg>
    <svg width="30" height="30"><path fill="#d9960a" d="M0 2h11l3 4H0z"/><path fill="#fcc93c" d="M0 6l13-1 2-1h15v24H0z"/><path fill="#1673c9" d="M5 28v-6l3-3h14l3 3v6z"/><path stroke="#0a3f7d" stroke-width="1.500" d="M9 23h12"/></svg>
    <svg width="30" height="30"><path fill="#0c4fa0" d="M0 11L15 0l15 11v4H0z"/><path fill="#f4f4f4" d="M3 9h24v7L15 20 3 15z"/><path fill="#2aa5ea" d="M0 11l15 10L30 11v18H0z"/><path fill="#4fc4f7" d="M30 11v18L15 21z"/></svg>
    <svg width="30" height="30"><circle cx="15" cy="15" r="15" fill="#f9c31f"/><path fill="#df3f32" d="M2 7.500A15 15 0 0 1 28 7.500H15L8 14z"/><path fill="#279c4b" d="M2 7.500l7 11c3 4 7 4 9 3l-5 8.400A15 15 0 0 1 2 7.500z"/><circle cx="15" cy="15" r="7.200" fill="#fff"/><circle cx="15" cy="15" r="5.700" fill="#3a76e0"/></svg>
    <svg width="30" height="30"><circle cx="15" cy="15" r="15" fill="#fff"/><g fill="none" stroke-width="4.400"><path stroke="#e5463a" d="M6.500 11A9.200 9.200 0 0 1 21.500 8.500"/><path stroke="#f6b90f" d="M6.500 11a9.200 9.200 0 0 0 0 8"/><path stroke="#33a554" d="M6.500 19a9.200 9.200 0 0 0 14.500 3"/><path stroke="#4181ee" d="M15 15.500h9.200c0 3-1 5-3.200 6.500"/></g></svg>
    <svg width="30" height="30"><rect y="4" width="30" height="21" rx="5" fill="#f00"/><path fill="#fff" d="M12 10v9l8-4.500z"/></svg>
    <span class="acad"><svg width="30" height="30"><path fill="#f7ddd5" d="M0 0h30v30H0z"/><path fill="#b5262b" d="M5 26L12 3h6l7 23h-5l-2-6h-7l-1 6zM15 9l-3 8h5z"/></svg></span>
  </div>
  <div class="tray">
    <svg class="chev" width="14" height="8"><path fill="none" stroke="#222" stroke-width="1.800" d="M1 7l6-5.500L13 7"/></svg>
    <div class="lang">ENG<br>IN</div>
    <svg class="wifi" width="20" height="16"><g fill="none" stroke="#222" stroke-width="1.500"><path d="M1 6c5-6 13-6 18 0M4 9c4-4 8-4 12 0M6.500 12c2-2.500 5-2.500 7 0"/></g><circle cx="10" cy="13.500" r="2"/></svg>
    <svg class="vol" width="20" height="18"><path fill="none" stroke="#222" stroke-width="1.300" d="M1 6h3l5-4v14l-5-4H1zM12 6c1.500 2 1.500 4 0 6"/><path fill="none" stroke="#aaa" stroke-width="1.300" d="M14.500 4c3 3 3 7 0 10M17 2c4 4 4 10 0 14"/></svg>
    <svg class="bat" width="20" height="14"><rect x=".8" y="1" width="16" height="11.500" rx="2.500" fill="none" stroke="#222" stroke-width="1.500"/><path fill="#222" d="M3 3.200h8.500v7H3zM17.500 5h2v4h-2z"/></svg>
    <div class="clock">04:49 PM<br>13/04/2024</div>
    <svg class="bell" width="16" height="20"><path fill="#063f92" d="M8 1c5 0 6 4 6 7v4l2 4H0l2-4V8c0-3 1-7 6-7zM5 17h6c-1 3-5 3-6 0z"/></svg>
    <svg class="copilot" width="30" height="30"><defs><linearGradient id="cp" x2="0" y2="1"><stop offset="0" stop-color="#1c8fe0"/><stop offset=".6" stop-color="#56b967"/><stop offset="1" stop-color="#d7c727"/></linearGradient><linearGradient id="cq" x2="1" y2="1"><stop offset="0" stop-color="#b06bea"/><stop offset="1" stop-color="#f5636f"/></linearGradient></defs><path fill="url(#cp)" d="M8 1h11c3 0 4 8 1 8-4 0-5 11-9 11H4c-5 0-4-5-2-11 2-5 2-8 6-8z"/><path fill="url(#cq)" d="M18 8h7c4 0 4 5 2 9-1 3-2 4-5 4H12c3-2 3-13 6-13z"/><path fill="#1559b8" d="M14 1h6c2 2 2 6 4 7h-7z"/><rect x="7" y="20" width="23" height="9" rx="2" fill="#ffc40c"/><text x="18.500" y="27.500" text-anchor="middle">PRE</text></svg>
  </div>
</footer>
</body>
</html>
```
FILE: styles.css
```css
* { box-sizing: border-box; }
body {
  margin: 0;
  width: 1918px;
  height: 1078px;
  overflow: hidden;
  display: flex;
  flex-direction: column;
  background: #222932;
  color: #f2f3f4;
  font: 14px/18px "Noto Sans", "Open Sans", sans-serif;
  letter-spacing: -.1px;
  white-space: nowrap;
}
svg { display: block; flex: none; overflow: visible; }
p { margin: 0; }
.defs { position: absolute; }
.l { fill: none; stroke: #d9d9d9; }
.b { fill: none; stroke: #6cb8f4; }
.b[fill] { fill: #46617f; }
.w { fill: none; stroke: #fff; stroke-width: 1.3; }
.stl { stroke: #d0d2d5; }
.fl { fill: #d9d9d9; fill-rule: evenodd; }
.fb { fill: #7cc8ff; }
.fb2 { fill: #8ccbfa; }
.fy { fill: #ffd37a; }

.caret {
  flex: none;
  width: 0;
  height: 0;
  border: 4px solid transparent;
  border-top: 5px solid #dadbdd;
  border-bottom: 0;
}
.caret.lg { border-width: 5px 5px 0; }
.caret.dim { border-top-color: #8c929e; }

/* title bar */
.titlebar { height: 29px; flex: none; display: flex; align-items: center; background: #464e60; padding-bottom: 3px; }
.app-menu { width: 55px; padding-left: 4px; display: flex; align-items: center; gap: 6px; }
.quick { width: 240px; display: grid; grid-template-columns: repeat(8, 30px); place-items: center; }
.quick-more { display: flex; align-items: center; padding-left: 3px; width: 439px; }
.redo { margin-left: 9px; }
.redo + .caret { margin-left: 8px; }
.custom { margin-left: 8px; }
.plane { margin-left: 9px; }
.share { margin-left: 6px; color: #7cc5fb; font-size: 14.500px; letter-spacing: -.45px; padding-top: 1px; }
.app-title { width: 470px; color: #9ba0ab; font-size: 14.500px; letter-spacing: -.1px; padding-top: 3px; }
.caret-right { width: 0; border: 5px solid transparent; border-left-color: #dadbdd; border-right: 0; margin-left: -1px; }
.keyword { width: 225px; height: 27px; margin: 0 4px 0 7px; border: 1px solid #2a303c; border-top: 0; padding: 4px 3px; font-style: italic; font-size: 13.500px; letter-spacing: .05px; color: #b4b8c0; }
.user { margin-left: 10px; }
.signin { margin-left: 7px; width: 105px; padding-top: 1px; font-size: 14.500px; letter-spacing: -.3px; }
.cart { margin-left: 13px; }
.tri { margin: 0 7px 0 11px; }
.help { margin: 0 9px 0 23px; width: 20px; height: 20px; border-radius: 50%; background: #d9d9d9; color: #464e60; font: bold 16px/20px "Noto Sans", sans-serif; text-align: center; position: relative; }
.help::before { content: ""; position: absolute; left: -12px; top: -1px; width: 1px; height: 22px; background: #3a4252; }
.winbtns { margin-left: 89px; }

/* ribbon tabs */
.ribbon-tabs { height: 30px; flex: none; display: flex; padding: 5px 0 0 3px; color: #b7babd; }
.ribbon-tabs span { padding: 4px 12px 0; letter-spacing: .05px; }
.ribbon-tabs .on { background: #3b4453; color: #f2f3f4; padding: 4px 12px 0 11px; }
.mini { width: 19px; height: 9px; margin: 9px 5px 0 26px; background: #f4f4f4; position: relative; }
.mini::after { content: ""; position: absolute; left: 6px; top: 2px; border: 3.500px solid transparent; border-bottom: 4px solid #444; border-top: 0; }
.ribbon-tabs .caret { margin-top: 11px; border-width: 4px 3.500px 0; }

/* ribbon */
.ribbon { height: 124px; flex: none; display: flex; background: #3b4453; padding-top: 1px; }
.panel { flex: none; height: 122px; border-right: 1px solid #242b35; display: flex; flex-direction: column; }
.panel .body { display: flex; height: 98px; padding-top: 4px; }
.label { display: flex; align-items: center; justify-content: center; gap: 7px; height: 24px; font-size: 14.500px; }
.launch { margin-left: 81px; }
.draw { width: 278px; } .modify { width: 316px; } .annot { width: 211px; }
.layers { width: 341px; } .block { width: 100px; } .props { width: 276px; }
.groups { width: 85px; } .utils { width: 121px; } .clip { width: 100px; }
.view { width: 90px; border: 0; }
.big { display: flex; flex-direction: column; align-items: center; padding-top: 2px; line-height: 20px; text-align: center; flex: none; }
.big svg { margin-bottom: 5px; height: 42px; }
.big span { display: block; }
.big .caret { margin-top: 3px; border-width: 4px 3.500px 0; }
.w-line { width: 54px; } .w-poly { width: 52px; } .w-circle { width: 70px; } .w-arc { width: 47px; }
.w-line span { margin-left: -1px; } .w-poly span { margin-left: -2px; }
.w-text { width: 58px; } .w-dim { width: 74px; } .w-lay { width: 77px; } .w-ins { width: 52px; }
.w-match { width: 77px; } .w-grp { width: 53px; } .w-meas { width: 90px; } .w-paste { width: 68px; } .w-base { width: 80px; }
.big.w-ins svg { margin-bottom: 3px; margin-top: -1px; }
.row { display: flex; align-items: center; height: 31px; }
.row > .caret { border-width: 4px 3.500px 0; }
.draw .col { padding-left: 5px; }
.draw .row { gap: 10px; }
.modify .body { padding-left: 7px; }
.modify .row svg { margin-right: 7px; }
.m1 { width: 91px; } .m2 { width: 88px; }
.m3 { width: 95px; }
.m3 .row { position: relative; }
.m3 .caret { position: absolute; left: 70px; top: 13px; }
.m3 .caret.f { left: 74px; }
.annot .col { padding-left: 7px; }
.annot .row { gap: 10px; }
.annot .tbl { gap: 7px; }
.combo { display: flex; align-items: center; background: #4d586b; border: 1px solid #262e39; font-size: 14.500px; letter-spacing: -.2px; }
.combo .caret { margin-left: auto; margin-right: 1px; }
.layer-combo { width: 260px; height: 30px; margin: 1px 0 0; padding-left: 7px; }
.layer-combo svg + svg { margin-left: 7px; }
.layer-combo svg + svg + svg { margin-left: 4px; }
.swatch { width: 18px; height: 20px; background: #fff; border: 1px solid #111; margin: 0 6px 0 7px; }
.swatch.wide { width: 20px; border: 1px solid #d6ccc0; margin: 0 12px 0 14px; }
.ln { width: 80px; height: 1px; background: #fff; margin: 0 2px 0 4px; }
.five { gap: 10px; padding-left: 3px; }
.five span { margin-left: -2px; }
.block .col { padding-left: 3px; }
.block .row { gap: 10px; }
.col.ic { width: 25px; display: flex; flex-direction: column; gap: 11px; padding-top: 5px; padding-left: 1px; }
.combos { display: flex; flex-direction: column; gap: 2px; padding-top: 2px; }
.combos .combo { width: 171px; height: 28px; }
.groups .col, .utils .col { width: 26px; }
.groups .row, .utils .row { justify-content: center; }
.toggle { width: 29px; height: 28px; flex: none; border: 1px solid #6cc0ff; background: #46617f; padding: 2px 0 0 4px; margin-top: -2px; }
.clip .col { padding-left: 2px; }
.view .launch { margin-left: 3px; }
.view .label { padding-right: 4px; }
.props .label { padding-left: 87px; }

/* drawing tabs */
.file-tabs { height: 37px; flex: none; display: flex; padding: 4px 0 0 10px; border-bottom: 5px solid #3b4453; font-size: 14.500px; }
.ftab { height: 28px; display: flex; align-items: center; }
.start { width: 170px; padding: 2px 0 0 29px; background: #323a47; color: #bcbfc4; clip-path: path("M0 28c12 0 13-6 17-18 2-7 4-10 10-10h132c6 0 8 3 9 8v20z"); }
.current { width: 161px; margin-left: -5px; padding: 2px 0 0 18px; background: #3b4453; font-weight: bold; clip-path: path("M0 28c5-4 5-22 9-26 2-2 5-2 8-2h128c15 0 11 24 16 28z"); letter-spacing: -.45px; }
.current svg { margin-left: 46px; margin-top: -3px; }
.plus { width: 26px; height: 21px; margin: 6px 0 0 8px; background: #323a47; justify-content: center; clip-path: path("M0 0h19q4 0 7 16v5H10Q4 21 0 0z"); }
.plus svg { margin-top: -2px; }

/* model space */
.canvas { position: relative; height: 741px; flex: none; }
.symbols path { vector-effect: non-scaling-stroke; }
.view-label { position: absolute; left: 3px; top: 7px; display: flex; font-size: 14.500px; letter-spacing: 0; }
.view-win { position: absolute; left: 1846px; top: 9px; }
.viewcube { position: absolute; left: 1764px; top: 44px; }
.compass { font: bold 22px "Liberation Sans", Arial, sans-serif; fill: #b4b5b7; letter-spacing: 0; }
.top { font: bold 16px "Liberation Sans", Arial, sans-serif; fill: #4c5057; letter-spacing: 0; }
.wcs { position: absolute; left: 41px; top: 161px; width: 57px; height: 21px; border: 1px solid #8b8d9c; border-radius: 5px; background: #9c9eac; color: #42464e; display: flex; align-items: center; justify-content: space-between; padding: 0 4px; font: 13px "Liberation Sans", Arial, sans-serif; }
.navbar { position: absolute; left: 1877px; top: 256px; width: 40px; height: 259px; border-radius: 4px; background: #5a5f63; box-shadow: 0 0 0 1px #171c22, inset 0 0 0 1px #6a6f73; }
.command { position: absolute; left: 387px; top: 707px; width: 1146px; height: 34px; display: flex; }
.grip { width: 70px; background: #262c38; border-radius: 4px 0 0 4px; display: flex; align-items: center; padding-left: 5px; gap: 7px; }
.grip svg:nth-child(2) { margin-left: -1px; }
.grip .wrench { margin-left: 7px; }
.entry { flex: 1; height: 32px; margin-top: 1px; background: #bcbdbf; border-radius: 3px 0 0 3px; display: flex; align-items: center; padding-left: 5px; color: #5f6062; font: italic 14.800px "DejaVu Sans Mono", "Liberation Mono", monospace; letter-spacing: 0; }
.entry span { margin-left: 8px; }
.caret.grey { border-top-color: #858688; margin-left: 2px; }
.caret.up { margin: 0 6px 0 auto; transform: rotate(180deg); border-top-color: #555; }

/* layout tabs */
.layout-tabs { height: 26px; flex: none; border-top: 1px solid #474d58; display: flex; padding-left: 14px; color: #bcbfc4; font-size: 14.500px; line-height: 20px; }
.layout-tabs span { width: 78px; height: 22px; background: #323a47; text-align: center; border-radius: 0 0 8px 8px; margin-right: 4px; letter-spacing: -.35px; }
.layout-tabs .on { width: 72px; background: #3b4453; color: #fff; font-weight: bold; margin-right: 2px; clip-path: path("M0 0h72c-3 4-3 22-8 22H8C2 22 4 4 0 0z"); }
.layout-tabs .add { width: 27px; height: 20px; margin: 1px 0 0 2px; display: grid; place-items: center; border-radius: 10px 2px 10px 2px; }

/* status bar */
.status { height: 33px; flex: none; display: flex; padding: 1px 0 2px 1211px; gap: 3px; }
.seg { height: 30px; background: #3b4453; display: flex; align-items: center; flex: none; }
.act, .ic { display: grid; place-items: center; width: 28px; height: 28px; flex: none; }
.act { background: #6290c5; }
.g { margin-right: 2px; }
.s-model { width: 60px; justify-content: center; font-size: 14px; letter-spacing: -.2px; }
.s-grid { width: 80px; } .s-grid .caret { margin-left: 6px; }
.s-grid .ic { width: 31px; }
.s-ortho { width: 210px; }
.s-ortho .ic:nth-child(2) { margin-left: 2px; }
.caret.p { margin: 0 6px 0 6px; } .caret.q { margin: 0 7px 0 6px; } .caret.r { margin-left: 3px; }
.s-anno { width: 133px; } .s-anno .ic { width: 31px; } .s-anno span { margin: 0 4px 0 6px; letter-spacing: -1px; font-size: 14.500px; }
.s-gear { width: 50px; padding-left: 5px; gap: 9px; }
.s-plus { width: 30px; margin-left: -2px; padding-left: 4px; }
.s-iso { width: 30px; padding-left: 4px; }
.s-perf { width: 34px; padding-left: 3px; }
.s-full { flex: 1; padding-left: 4px; gap: 10px; }

/* taskbar */
.taskbar { flex: 1; display: flex; align-items: center; background: #eee; border-top: 1px solid #b5b7ba; color: #1b1b1b; font-size: 14.500px; line-height: 20px; letter-spacing: -.1px; }
.weather { width: 585px; padding-left: 27px; display: flex; align-items: center; gap: 7px; }
.weather div { line-height: 19.500px; }
.sub { color: #5d5d5d; }
.apps { display: flex; align-items: center; width: 961px; gap: 25px; padding-top: 2px; }
.search { width: 273px; height: 40px; margin: 0 -9px 0 -7px; border-radius: 20px; background: #fbfbfb; border: 1px solid #dedede; border-bottom-color: #bbb; display: flex; align-items: center; padding-left: 13px; font-size: 16px; color: #555; }
.search span { margin-left: 11px; padding-top: 1px; letter-spacing: -.1px; }
.bags { margin-left: auto; margin-right: 8px; }
.acad { position: relative; }
.acad::after { content: ""; position: absolute; left: 11px; top: 34px; width: 7px; height: 4px; border-radius: 2px; background: #868686; }
.tray { display: flex; align-items: center; }
.lang { width: 40px; margin-left: 21px; text-align: center; line-height: 20px; }
.wifi { margin-left: 17px; }
.vol { margin-left: 10px; }
.bat { margin-left: 10px; }
.clock { width: 97px; text-align: right; padding-bottom: 1px; }
.bell { margin-left: 12px; }
.copilot { margin-left: 22px; }
.copilot text { font: bold 8px "Noto Sans", sans-serif; fill: #222; letter-spacing: .3px; }
```
